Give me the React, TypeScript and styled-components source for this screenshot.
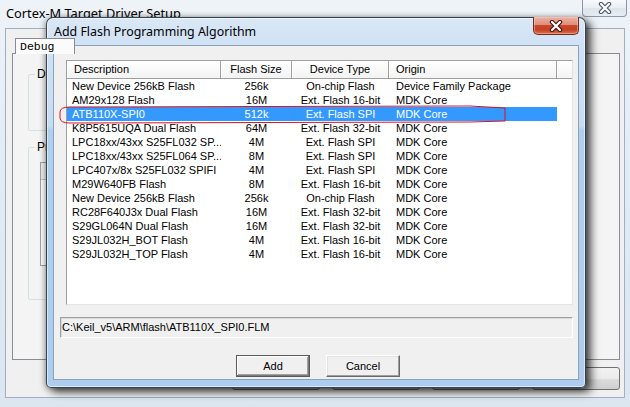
import React from 'react';
import styled, { createGlobalStyle } from 'styled-components';

const GlobalStyle = createGlobalStyle`
  html, body { margin: 0; padding: 0; }
  body {
    width: 630px; height: 407px; overflow: hidden;
    background: #dfe8f1;
    font-family: "Liberation Sans", Arial, sans-serif;
  }
`;

const Desktop = styled.div`
  position: relative;
  width: 630px;
  height: 407px;
  overflow: hidden;
`;

/* ---------- background window ---------- */
const BgWindow = styled.div`
  position: absolute;
  left: 0;
  top: 0;
  width: 630px;
  height: 407px;
  box-sizing: border-box;
  display: flex;
  flex-direction: column;
  padding: 0 5px 9px 5px;
  background: linear-gradient(180deg, #eef3f8 0%, #e3ebf3 40%, #dce6f0 100%);
`;

const BgTitleBar = styled.div`
  height: 28px;
  flex: none;
  display: flex;
  align-items: flex-start;
`;

const WinTitle = styled.div`
  font-family: "Noto Sans", "Open Sans", sans-serif;
  font-size: 12.4px;
  line-height: 16px;
  color: #000;
  white-space: nowrap;
`;

const BgTitleText = styled(WinTitle)`
  padding: 5px 0 0 1px;
  font-size: 12.8px;
`;

const BgClose = styled.div`
  margin-left: auto;
  margin-right: -2px;
  width: 45px;
  height: 17px;
  box-sizing: border-box;
  border: 1px solid #8d98a5;
  border-top: none;
  border-radius: 0 0 4px 4px;
  background: linear-gradient(180deg, #f7f9fb 0%, #e9eef3 50%, #dde4ec 51%, #e7edf3 100%);
  display: flex;
  align-items: center;
  justify-content: center;
`;

const BgClient = styled.div`
  flex: 1;
  box-sizing: border-box;
  border: 1px solid #9fb0c2;
  background: #f0f0f0;
  display: flex;
  flex-direction: column;
  padding: 9px 4px 0 6px;
`;

const TabStrip = styled.div`
  height: 16px;
  display: flex;
  position: relative;
  z-index: 1;
  margin-bottom: -1px;
`;

const Tab = styled.div`
  margin-left: 3px;
  width: 60px;
  box-sizing: border-box;
  border: 1px solid #898c95;
  border-bottom: none;
  background: #fbfbfb;
  font-family: "Liberation Mono", monospace;
  font-size: 11.5px;
  line-height: 15px;
  padding-left: 4px;
  color: #000;
`;

const TabPanel = styled.div`
  height: 307px;
  box-sizing: border-box;
  border: 1px solid #898c95;
  background: #f4f4f4;
  padding: 13px 0 0 15px;
  display: flex;
  flex-direction: column;
  gap: 9px;
`;

const Group = styled.fieldset<{ $h: number }>`
  margin: 0;
  width: 530px;
  height: ${(p) => p.$h}px;
  box-sizing: border-box;
  border: 1px solid #d5dfe5;
  border-radius: 2px;
  padding: 8px 0 0 0;
  legend {
    margin-left: 6px;
    padding: 0 2px;
    white-space: nowrap;
    font-size: 12px;
    color: #000;
  }
`;

const BgGrid = styled.div`
  margin-left: 11px;
  width: 420px;
  height: 104px;
  box-sizing: border-box;
  border: 1px solid #a0a0a0;
  background: #fff;
  &::before {
    content: "";
    display: block;
    height: 16px;
    border-bottom: 1px solid #c8c8c8;
    background: #f0f0f0;
  }
`;

const BgButtons = styled.div`
  margin-top: 7px;
  display: flex;
  justify-content: flex-end;
  gap: 12px;
`;

const BgButton = styled.div`
  width: 88px;
  height: 23px;
  box-sizing: border-box;
  border: 1px solid #707070;
  border-radius: 3px;
  background: linear-gradient(180deg, #f2f2f2 0%, #ebebeb 50%, #dddddd 51%, #cfcfcf 100%);
`;

/* ---------- dialog ---------- */
const Dialog = styled.div`
  position: absolute;
  left: 46px;
  top: 17px;
  width: 540px;
  height: 371px;
  box-sizing: border-box;
  border: 1px solid rgba(30, 40, 50, 0.85);
  border-radius: 7px 7px 5px 5px;
  padding: 0 6px 7px 6px;
  display: flex;
  flex-direction: column;
  background: linear-gradient(180deg, #dae8f6 0px, #cfe1f4 30px, #c6dcf2 108px, #b0cfee 112px, #aecdee 100%);
  box-shadow: 5px 4px 9px rgba(0, 0, 0, 0.7), -1px 1px 6px rgba(0, 0, 0, 0.35),
    inset 0 0 0 1px rgba(255, 255, 255, 0.55);
`;

const TitleBar = styled.div`
  height: 27px;
  flex: none;
  display: flex;
  align-items: flex-start;
`;

const DlgTitle = styled(WinTitle)`
  padding: 6px 0 0 1px;
`;

const CloseButton = styled.div`
  margin-left: auto;
  width: 46px;
  height: 18px;
  margin-top: -1px;
  box-sizing: border-box;
  border: 1px solid #6e2a1d;
  border-top: none;
  border-radius: 0 0 5px 5px;
  background: linear-gradient(180deg, #ecb1a2 0%, #df8e79 45%, #c9472c 50%, #c44126 75%, #de6c4e 100%);
  box-shadow: inset 0 0 0 1px rgba(255, 210, 200, 0.45);
  display: flex;
  align-items: center;
  justify-content: center;
`;

const Client = styled.div`
  flex: 1;
  box-sizing: border-box;
  border: 1px solid #8aa2bb;
  background: #f0f0f0;
  display: flex;
  flex-direction: column;
  font-family: "Liberation Sans", Arial, sans-serif;
  font-size: 11px;
  color: #000;
`;

const ListView = styled.div`
  margin: 14px 5px 0 12px;
  height: 245px;
  box-sizing: border-box;
  border: 1px solid;
  border-color: #a0a0a0 #e3e3e3 #e3e3e3 #a0a0a0;
  background: #fff;
  display: flex;
  flex-direction: column;
`;

const cols = '154px 71px 97px 168px 1fr';

const HeaderRow = styled.div`
  display: grid;
  grid-template-columns: ${cols};
  height: 18px;
  box-sizing: border-box;
  border-bottom: 1px solid #a0a0a0;
  background: linear-gradient(180deg, #ffffff 0%, #f3f3f3 100%);
`;

const HeaderCell = styled.div<{ $center?: boolean; $last?: boolean }>`
  box-sizing: border-box;
  border-right: ${(p) => (p.$last ? 'none' : '1px solid #a0a0a0')};
  box-shadow: inset 1px 0 0 #ffffff;
  line-height: 17px;
  padding-left: ${(p) => (p.$center ? 0 : 7)}px;
  text-align: ${(p) => (p.$center ? 'center' : 'left')};
  white-space: nowrap;
  overflow: hidden;
`;

const Row = styled.div`
  display: grid;
  grid-template-columns: ${cols};
  height: 14px;
`;

const Cell = styled.div<{ $center?: boolean; $pad?: number; $sel?: boolean }>`
  line-height: 14px;
  white-space: nowrap;
  overflow: hidden;
  padding-left: ${(p) => p.$pad ?? 0}px;
  text-align: ${(p) => (p.$center ? 'center' : 'left')};
  background: ${(p) => (p.$sel ? '#3399ff' : 'transparent')};
  color: ${(p) => (p.$sel ? '#ffffff' : '#000000')};
`;

const PathField = styled.div`
  margin: 12px 5px 0 6px;
  height: 21px;
  box-sizing: border-box;
  border: 1px solid;
  border-color: #a0a0a0 #ffffff #ffffff #a0a0a0;
  box-shadow: inset 1px 1px 0 #d8d8d8;
  background: #f0f0f0;
  line-height: 18px;
  padding-left: 1px;
  white-space: nowrap;
`;

const ButtonRow = styled.div`
  margin-top: 17px;
  padding-left: 182px;
  display: flex;
  gap: 16px;
`;

const Button = styled.div<{ $default?: boolean }>`
  width: 74px;
  height: 22px;
  box-sizing: border-box;
  border: 1px solid;
  border-color: ${(p) => (p.$default ? '#5a5a5a' : '#ffffff #696969 #696969 #ffffff')};
  box-shadow: ${(p) =>
    p.$default
      ? 'inset -1px -1px 0 #7a7a7a, inset 1px 1px 0 #ffffff, inset -2px -2px 0 #a0a0a0'
      : 'inset -1px -1px 0 #a0a0a0, inset 1px 1px 0 #e3e3e3'};
  background: #f0f0f0;
  line-height: 20px;
  text-align: center;
  color: #000;
`;

const Annotation = styled.svg`
  position: absolute;
  left: 0;
  top: 0;
  width: 630px;
  height: 407px;
  pointer-events: none;
`;

type Algo = [string, string, string, string];

const rows: Algo[] = [
  ['New Device 256kB Flash', '256k', 'On-chip Flash', 'Device Family Package'],
  ['AM29x128 Flash', '16M', 'Ext. Flash 16-bit', 'MDK Core'],
  ['ATB110X-SPI0', '512k', 'Ext. Flash SPI', 'MDK Core'],
  ['K8P5615UQA Dual Flash', '64M', 'Ext. Flash 32-bit', 'MDK Core'],
  ['LPC18xx/43xx S25FL032 SP...', '4M', 'Ext. Flash SPI', 'MDK Core'],
  ['LPC18xx/43xx S25FL064 SP...', '8M', 'Ext. Flash SPI', 'MDK Core'],
  ['LPC407x/8x S25FL032 SPIFI', '4M', 'Ext. Flash SPI', 'MDK Core'],
  ['M29W640FB Flash', '8M', 'Ext. Flash 16-bit', 'MDK Core'],
  ['New Device 256kB Flash', '256k', 'On-chip Flash', 'MDK Core'],
  ['RC28F640J3x Dual Flash', '16M', 'Ext. Flash 32-bit', 'MDK Core'],
  ['S29GL064N Dual Flash', '16M', 'Ext. Flash 32-bit', 'MDK Core'],
  ['S29JL032H_BOT Flash', '4M', 'Ext. Flash 16-bit', 'MDK Core'],
  ['S29JL032H_TOP Flash', '4M', 'Ext. Flash 16-bit', 'MDK Core'],
];

const CloseX = ({ dark, light }: { dark: string; light: string }) => (
  <svg width="14" height="12" viewBox="0 0 14 12">
    <path d="M3 2 L11 10 M11 2 L3 10" stroke={dark} strokeWidth="4.4" strokeLinecap="round" />
    <path d="M3 2 L11 10 M11 2 L3 10" stroke={light} strokeWidth="2.2" strokeLinecap="round" />
  </svg>
);

export default function App() {
  const selected = 2;
  return (
    <Desktop>
      <GlobalStyle />
      <BgWindow>
        <BgTitleBar>
          <BgTitleText>Cortex-M Target Driver Setup</BgTitleText>
          <BgClose>
            <CloseX dark="#4a5562" light="#ffffff" />
          </BgClose>
        </BgTitleBar>
        <BgClient>
          <TabStrip>
            <Tab>Debug</Tab>
          </TabStrip>
          <TabPanel>
            <Group $h={64}>
              <legend>Do</legend>
            </Group>
            <Group $h={160}>
              <legend>Pr</legend>
              <BgGrid />
            </Group>
          </TabPanel>
          <BgButtons>
            <BgButton />
            <BgButton />
            <BgButton />
            <BgButton />
          </BgButtons>
        </BgClient>
      </BgWindow>

      <Dialog>
        <TitleBar>
          <DlgTitle>Add Flash Programming Algorithm</DlgTitle>
          <CloseButton>
            <CloseX dark="#3a1510" light="#ffffff" />
          </CloseButton>
        </TitleBar>
        <Client>
          <ListView>
            <HeaderRow>
              <HeaderCell>Description</HeaderCell>
              <HeaderCell $center>Flash Size</HeaderCell>
              <HeaderCell $center>Device Type</HeaderCell>
              <HeaderCell>Origin</HeaderCell>
              <HeaderCell $last />
            </HeaderRow>
            {rows.map((r, i) => {
              const sel = i === selected;
              return (
                <Row key={i}>
                  <Cell $pad={5} $sel={sel}>{r[0]}</Cell>
                  <Cell $center $sel={sel}>{r[1]}</Cell>
                  <Cell $center $sel={sel}>{r[2]}</Cell>
                  <Cell $pad={7} $sel={sel}>{r[3]}</Cell>
                  <Cell />
                </Row>
              );
            })}
          </ListView>
          <PathField>C:\Keil_v5\ARM\flash\ATB110X_SPI0.FLM</PathField>
          <ButtonRow>
            <Button $default>Add</Button>
            <Button>Cancel</Button>
          </ButtonRow>
        </Client>
      </Dialog>

      <Annotation viewBox="0 0 630 407">
        <path
          d="M70 107 L470 106 L505 108 L505 121 L470 122 L70 123 Q60 123 60 118 L60 112 Q60 107 70 107 Z"
          fill="none"
          stroke="#e0101c"
          strokeWidth="1"
        />
      </Annotation>
    </Desktop>
  );
}
